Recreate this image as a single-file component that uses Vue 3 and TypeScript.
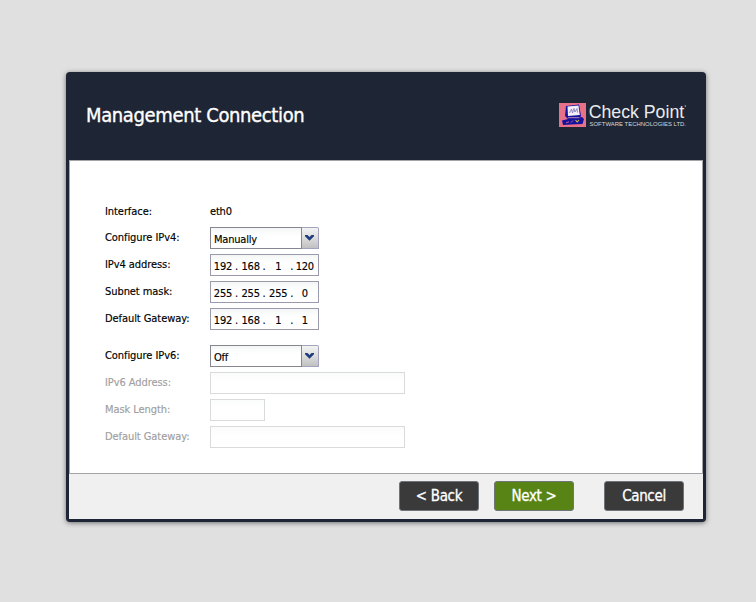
<script setup lang="ts">
interface AddressRow {
  label: string
  octets: string[]
}

interface DisabledRow {
  label: string
  short: boolean
}

const addressRows: AddressRow[] = [
  { label: 'IPv4 address:', octets: ['192', '168', '1', '120'] },
  { label: 'Subnet mask:', octets: ['255', '255', '255', '0'] },
  { label: 'Default Gateway:', octets: ['192', '168', '1', '1'] },
]

const disabledRows: DisabledRow[] = [
  { label: 'IPv6 Address:', short: false },
  { label: 'Mask Length:', short: true },
  { label: 'Default Gateway:', short: false },
]
</script>

<template>
  <main class="page">
    <section class="wizard">
      <header class="header">
        <h1 class="title">Management Connection</h1>
        <svg class="logo" width="130" height="36" viewBox="0 -5 130 36">
          <rect x="0" y="1" width="27" height="24" fill="#e8718a" />
          <path d="M7 4 L20 2.5 L22 14 L20 17 L9 17 L6 14 Z" fill="#15139c" />
          <path d="M8.5 4.5 L19.5 3.5 L20.8 13 L9 14 Z" fill="#f4eef8" />
          <path d="M10.5 11 L12.5 7 L13.5 11 L15 6.5 L16 10 L18 6.5 L18.5 10.5" fill="none" stroke="#7770bb" stroke-width="0.8" />
          <path d="M3 18.5 L9 17 L23 15 L25 17 L23.5 22 L12 22.5 L4 23 Z" fill="#15139c" />
          <path d="M9 15.7 H20.5" stroke="#e6a0c0" stroke-width="0.8" />
          <path d="M7 20.8 L10 19.8 M12 20.5 L14 18.5" stroke="#d86a96" stroke-width="0.9" />
          <path d="M16.5 18 L18.2 20 L20 18" fill="none" stroke="#d9b74c" stroke-width="1.1" />
          <text class="brand" x="29.7" y="16.3" textLength="95.5" lengthAdjust="spacingAndGlyphs">Check Point</text>
          <circle cx="126.3" cy="4" r="0.7" fill="#c8ccd3" />
          <text class="tagline" x="30.5" y="23.6" textLength="96.5" lengthAdjust="spacingAndGlyphs">SOFTWARE TECHNOLOGIES LTD.</text>
        </svg>
      </header>

      <div class="content">
        <div class="row first">
          <span class="label">Interface:</span>
          <span class="value">eth0</span>
        </div>
        <div class="row">
          <span class="label">Configure IPv4:</span>
          <div class="select">
            <span class="choice">Manually</span>
            <span class="trigger">
              <svg width="9" height="6" viewBox="0 0 9 6"><path d="M0 0H2.5L4.5 2L6.5 0H9V1.2L4.5 5.7L0 1.2Z" fill="#203c7c" /></svg>
            </span>
          </div>
        </div>
        <div v-for="row in addressRows" :key="row.label" class="row">
          <span class="label">{{ row.label }}</span>
          <div class="address">
            <template v-for="(octet, i) in row.octets" :key="i">
              <span v-if="i > 0" class="dot">.</span>
              <span class="octet">{{ octet }}</span>
            </template>
          </div>
        </div>
        <div class="row group">
          <span class="label">Configure IPv6:</span>
          <div class="select">
            <span class="choice">Off</span>
            <span class="trigger">
              <svg width="9" height="6" viewBox="0 0 9 6"><path d="M0 0H2.5L4.5 2L6.5 0H9V1.2L4.5 5.7L0 1.2Z" fill="#203c7c" /></svg>
            </span>
          </div>
        </div>
        <div v-for="(row, i) in disabledRows" :key="i" class="row disabled">
          <span class="label">{{ row.label }}</span>
          <div class="field" :class="{ short: row.short }"></div>
        </div>
      </div>

      <footer class="footer">
        <button class="button" type="button">&lt; Back</button>
        <button class="button next" type="button">Next &gt;</button>
        <button class="button cancel" type="button">Cancel</button>
      </footer>
    </section>
  </main>
</template>

<style>
body {
  background: #e0e0e0;
}
</style>

<style scoped>
.page {
  box-sizing: border-box;
  height: 602px;
  padding: 72px 50px 80px 66px;
  background: #e0e0e0;
  font-family: Tahoma, 'DejaVu Sans Condensed', 'DejaVu Sans', sans-serif;
  font-size: 11px;
  color: #000;
  -webkit-text-stroke-width: 0.15px;
}

.wizard {
  box-sizing: border-box;
  display: flex;
  flex-direction: column;
  width: 640px;
  height: 450px;
  padding: 0 3px 3px;
  border-radius: 4px;
  background: #1e2534;
  box-shadow: 0 1px 5px rgba(0, 0, 0, 0.5);
}

.header {
  box-sizing: border-box;
  display: flex;
  justify-content: space-between;
  height: 88px;
  padding: 25px 14px 0 17px;
}

.title {
  margin: 5px 0 0;
  font-size: 20px;
  line-height: 26px;
  font-weight: 400;
  letter-spacing: -0.37px;
  color: #fff;
  white-space: nowrap;
  -webkit-text-stroke-width: 0.35px;
}

.logo {
  display: block;
  overflow: visible;
  -webkit-text-stroke-width: 0;
}

.brand {
  font-family: 'Liberation Sans', sans-serif;
  font-size: 19px;
  fill: #e9ebee;
}

.tagline {
  font-family: 'Liberation Sans', sans-serif;
  font-size: 6px;
  fill: #d4d8de;
}

.content {
  box-sizing: border-box;
  height: 314px;
  padding: 40px 0 0 35px;
  border: 1px solid #a4a4a8;
  background: #fff;
}

.row {
  display: flex;
  height: 27px;
}

.row.first {
  height: 26px;
}

.row.group {
  margin-top: 10px;
}

.label {
  width: 105px;
  line-height: 22px;
  letter-spacing: -0.07px;
  white-space: nowrap;
}

.value {
  line-height: 22px;
  letter-spacing: -0.2px;
}

.disabled .label {
  color: #a0a0a0;
}

.select {
  display: flex;
  width: 109px;
  height: 22px;
}

.choice {
  box-sizing: border-box;
  width: 92px;
  padding-left: 3px;
  border: 1px solid #85868e;
  background: linear-gradient(#f4f6f6, #fff 8px);
  line-height: 23px;
  letter-spacing: -0.2px;
}

.trigger {
  box-sizing: border-box;
  display: flex;
  width: 17px;
  padding: 7px 0 0 3px;
  border: 1px solid #a3a3bd;
  border-left: 0;
  border-radius: 0 2px 0 0;
  background: linear-gradient(#f3f3f3, #dcdcdc 50%, #c1c1c1);
}

.address {
  box-sizing: border-box;
  display: flex;
  width: 109px;
  height: 22px;
  padding-left: 1px;
  border: 1px solid #9a9aac;
  background: linear-gradient(#f4f6f6, #fff 8px);
  line-height: 23px;
  letter-spacing: -0.2px;
}

.octet {
  width: 22px;
  text-align: center;
}

.octet:last-child {
  width: 20px;
}

.dot {
  width: 5px;
  margin-right: 0.6px;
  line-height: 23px;
  text-align: center;
}

.field {
  box-sizing: border-box;
  width: 195px;
  height: 22px;
  border: 1px solid #d9dada;
  background: linear-gradient(#fafbfb, #fff 8px);
}

.field.short {
  width: 55px;
}

.footer {
  display: flex;
  box-sizing: border-box;
  height: 45px;
  padding: 7px 0 0 330px;
  background: #f0f0f0;
}

.button {
  box-sizing: border-box;
  width: 80px;
  height: 30px;
  margin: 0 15px 0 0;
  padding: 0;
  border: 1px solid #6f7478;
  border-radius: 3px;
  background: #3a3a3a;
  color: #fff;
  font-family: inherit;
  font-size: 15px;
  line-height: 26px;
  letter-spacing: -0.35px;
  -webkit-text-stroke-width: 0.3px;
}

.next {
  margin-right: 30px;
  background: #578414;
}

.cancel {
  margin-right: 0;
}
</style>
